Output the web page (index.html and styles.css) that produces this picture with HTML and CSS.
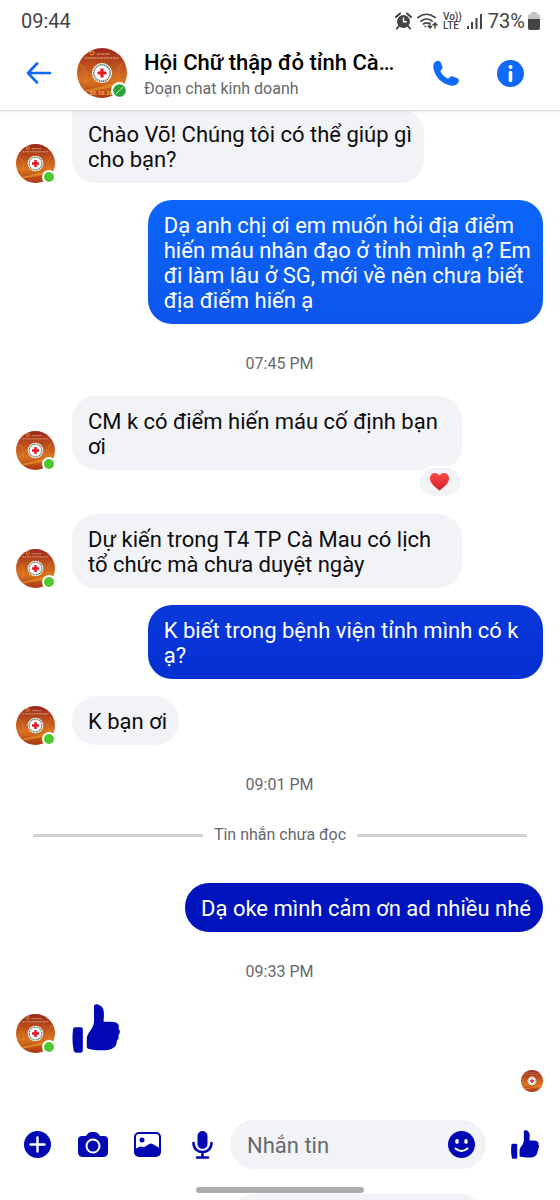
FILE: index.html
```html
<!DOCTYPE html>
<html lang="vi">
<head>
    <meta charset="UTF-8">
    <meta name="viewport" content="width=device-width, initial-scale=1.0">
    <title>Hội Chữ thập đỏ tỉnh Cà Mau</title>
    <link rel="stylesheet" href="styles.css">
</head>
<body>
    <!-- shared shapes -->
    <svg class="defs" aria-hidden="true">
        <defs>
            <linearGradient id="avatarBg" x1="0" y1="0" x2="0" y2="1">
                <stop offset="0" stop-color="#9c261c"/>
                <stop offset="0.3" stop-color="#b84a1c"/>
                <stop offset="0.65" stop-color="#d97420"/>
                <stop offset="1" stop-color="#a83616"/>
            </linearGradient>
            <linearGradient id="heartBg" x1="0" y1="0" x2="0" y2="1">
                <stop offset="0" stop-color="#f9484a"/>
                <stop offset="1" stop-color="#d31f26"/>
            </linearGradient>
            <clipPath id="round"><circle cx="25" cy="25" r="25"/></clipPath>
        </defs>
        <symbol id="avatar" viewBox="0 0 50 50">
            <g clip-path="url(#round)">
                <rect width="50" height="50" fill="url(#avatarBg)"/>
                <path d="M8 42c12-1 20-6 38-8v5C30 39 20 43 8 44z" fill="#f0a02c" opacity="0.6"/>
                <path d="M3 17c8 3 9 18 1 25M46 15c-7 7-7 13 0 21" stroke="#e58a35" stroke-width="2" fill="none" opacity="0.3"/>
                <circle cx="15" cy="5" r="2" fill="none" stroke="#f2a23c"/>
                <path d="M20 6h13" stroke="#e3b08c" stroke-dasharray="2 .5"/>
                <path d="M8 10h34" stroke="#e3b08c" stroke-dasharray="2.5 .6"/>
            </g>
            <circle cx="25" cy="25" r="10" fill="#fff"/>
            <circle cx="25" cy="25" r="8.2" fill="none" stroke="#4d7a62" stroke-width="1.6" stroke-dasharray="1.4 .7"/>
            <path d="M23.4 20.5h3.2v2.9h2.9v3.2h-2.9v2.9h-3.2v-2.9h-2.9v-3.2h2.9z" fill="#e3192a"/>
        </symbol>
        <symbol id="thumb" viewBox="0 0 144 149">
            <path d="M9 71h17q6 0 6 6v64q0 7-7 7H12q-7 0-8-7Q-2 112 2 78q1-7 7-7z"/>
            <path d="M44 106c0-20 21-27 22-54V7c0-7 9-8 16-4 12 6 15 18 14 30l-1 21c11 0 20-1 31 1 13 1 19 12 14 19 6 6 6 15 0 21 2 7 0 13-5 17 1 10-3 17-10 21-7 6-19 8-36 8-16 0-28-1-39-4-5-1-6-4-6-9z"/>
        </symbol>
    </svg>

    <div class="status-bar">
        <span class="clock">09:44</span>
        <svg width="17" height="18" viewBox="0 0 17 18" fill="#444">
            <circle cx="8.500" cy="9.500" r="6.500"/>
            <path d="M1 5l4-3.500M16 5l-4-3.500M4 14l-2 2.500M13 14l2 2.500" stroke="#444" stroke-width="2" stroke-linecap="round"/>
            <path d="M8.500 5.500v4.300h3.300" stroke="#fff" stroke-width="1.400" fill="none"/>
        </svg>
        <svg width="21" height="18" viewBox="0 0 21 18" fill="none" stroke="#444" stroke-width="1.700" stroke-linecap="round">
            <path d="M1 5.500Q9.500-1 18 5.500M4 9q5.500-4 11 0M6.500 12q3-2 5.500-.5"/>
            <path d="M8 14.500h.5M13 11v5m-2-2l2 2 1.500-1.500M18 16v-5m-2 2l2-2 2 2" stroke-width="1.500"/>
        </svg>
        <span class="volte"><span>Vo))</span><span>LTE</span></span>
        <svg width="16" height="16" viewBox="0 0 16 16" fill="#444">
            <path d="M0 13h2v3H0zM4 9h2v7H4zM8.500 5h2v11h-2zM13 1h2v15h-2z"/>
        </svg>
        <span class="percent">73%</span>
        <svg width="12" height="18" viewBox="0 0 12 18">
            <path d="M3 2V0h6v2h1q2 0 2 2v4H0V4q0-2 2-2z" fill="#c4c4c4"/>
            <path d="M0 7h12v9q0 2-2 2H2q-2 0-2-2z" fill="#444"/>
        </svg>
    </div>

    <header class="header">
        <button class="icon-button back" aria-label="Quay lại">
            <svg width="26" height="22" viewBox="0 0 26 22" fill="none" stroke="#0f69fa" stroke-width="2.600" stroke-linecap="round" stroke-linejoin="round">
                <path d="M11 1.500L2 11l9 9.500M2 11h22"/>
            </svg>
        </button>
        <div class="avatar avatar-large">
            <svg viewBox="0 0 50 50">
                <use href="#avatar"/>
                <text x="12" y="47" class="avatar-date">30.10.20</text>
            </svg>
            <svg class="badge" viewBox="0 0 17 17">
                <circle cx="8.500" cy="8.500" r="8.500" fill="#fff"/>
                <circle cx="8.500" cy="8.500" r="6.300" fill="#2fa336"/>
                <path d="M5 12l7-7" stroke="#b9e2b8"/>
            </svg>
        </div>
        <div class="contact">
            <h1>Hội Chữ thập đỏ tỉnh Cà…</h1>
            <p>Đoạn chat kinh doanh</p>
        </div>
        <button class="icon-button call" aria-label="Gọi">
            <svg width="26" height="26" viewBox="0 0 26 26" fill="#0f69fa">
                <path d="M2.500 1.500C5 0 7 .5 8 3l1.300 3.500c.5 1.500 0 2.500-1.300 3.500-.8.700-.6 1.500 0 2.500 1.500 2.500 3.500 4.300 6 5.700 1 .5 1.700.4 2.300-.4 1-1.300 2-1.800 3.500-1.300L24 18c2 1 2.500 2.700 1.300 4.500-1.800 2.700-4.500 3.800-8 3C8.500 23.500 2.500 17.500.5 8.500 0 5.500.5 3 2.500 1.500z"/>
            </svg>
        </button>
        <button class="icon-button info" aria-label="Thông tin">
            <svg width="27" height="27" viewBox="0 0 27 27">
                <circle cx="13.500" cy="13.500" r="13.500" fill="#0f69fa"/>
                <circle cx="13.500" cy="7" r="2" fill="#fff"/>
                <path d="M13.500 12.500v8" stroke="#fff" stroke-width="3.600" stroke-linecap="round"/>
            </svg>
        </button>
    </header>

    <main class="chat">
        <div class="message received continued">
            <div class="avatar"><svg><use href="#avatar"/></svg><span class="online"></span></div>
            <div class="bubble">Chào Võ! Chúng tôi có thể giúp gì<br>cho bạn?</div>
        </div>
        <div class="message sent">
            <div class="bubble blue-light">Dạ anh chị ơi em muốn hỏi địa điểm hiến máu nhân đạo ở tỉnh mình ạ? Em đi làm lâu ở SG, mới về nên chưa biết địa điểm hiến ạ</div>
        </div>
        <time class="time">07:45 PM</time>
        <div class="message received reacted">
            <div class="avatar"><svg><use href="#avatar"/></svg><span class="online"></span></div>
            <div class="bubble">CM k có điểm hiến máu cố định bạn ơi
                <span class="reaction">
                    <svg width="19" height="18" viewBox="0 0 19 18"><path d="M9.500 17.500C5 14 0 10.500 0 5.500 0 2 2.300 0 5 0c2 0 3.500 1 4.500 2.800C10.500 1 12 0 14 0c2.700 0 5 2 5 5.500 0 5-5 8.500-9.500 12z" fill="url(#heartBg)"/></svg>
                </span>
            </div>
        </div>
        <div class="message received">
            <div class="avatar"><svg><use href="#avatar"/></svg><span class="online"></span></div>
            <div class="bubble">Dự kiến trong T4 TP Cà Mau có lịch tổ chức mà chưa duyệt ngày</div>
        </div>
        <div class="message sent">
            <div class="bubble blue-mid">K biết trong bệnh viện tỉnh mình có k ạ?</div>
        </div>
        <div class="message received">
            <div class="avatar"><svg><use href="#avatar"/></svg><span class="online"></span></div>
            <div class="bubble">K bạn ơi</div>
        </div>
        <time class="time">09:01 PM</time>
        <div class="unread">Tin nhắn chưa đọc</div>
        <div class="message sent">
            <div class="bubble blue-dark">Dạ oke mình cảm ơn ad nhiều nhé</div>
        </div>
        <time class="time">09:33 PM</time>
        <div class="message received">
            <div class="avatar"><svg><use href="#avatar"/></svg><span class="online"></span></div>
            <svg class="big-thumb"><use href="#thumb"/></svg>
        </div>
        <div class="seen"><svg><use href="#avatar"/></svg></div>
    </main>

    <form class="composer">
        <button type="button" class="tool" aria-label="Thêm">
            <svg width="27" height="27" viewBox="0 0 27 27">
                <circle cx="13.500" cy="13.500" r="13.500"/>
                <path d="M13.500 6.500v14M6.500 13.500h14" stroke="#fff" stroke-width="2.400" stroke-linecap="round"/>
            </svg>
        </button>
        <button type="button" class="tool" aria-label="Máy ảnh">
            <svg width="30" height="25" viewBox="0 0 30 25">
                <path d="M9 2.500Q10.500 0 13 0h4q2.500 0 4 2.500L22 4h4q4 0 4 4v12q0 5-5 5H5q-5 0-5-5V8q0-4 4-4h4z"/>
                <circle cx="15" cy="14" r="6.500" fill="none" stroke="#fff" stroke-width="2"/>
            </svg>
        </button>
        <button type="button" class="tool" aria-label="Ảnh">
            <svg width="27" height="25" viewBox="0 0 27 25">
                <rect x="1" y="1" width="25" height="23" rx="4" fill="#fff" stroke="#0008b4" stroke-width="2"/>
                <circle cx="8" cy="8" r="2.500"/>
                <path d="M1 17l4-2q1.500-.8 3-.2l2 .4 5-3q2-1.200 4 0l7 4v4q0 4-4 4H5q-4 0-4-4z"/>
            </svg>
        </button>
        <button type="button" class="tool" aria-label="Ghi âm">
            <svg width="21" height="28" viewBox="0 0 21 28">
                <rect x="5.500" y="0" width="10" height="18" rx="5"/>
                <path d="M1.500 12c0 12 18 12 18 0M10.500 21v5M5 26.500h11" fill="none" stroke="#0008b4" stroke-width="2.600" stroke-linecap="round"/>
            </svg>
        </button>
        <div class="field">
            <input type="text" placeholder="Nhắn tin" aria-label="Nhắn tin">
            <button type="button" class="emoji" aria-label="Biểu tượng cảm xúc">
                <svg width="27" height="27" viewBox="0 0 27 27">
                    <circle cx="13.500" cy="13.500" r="13.500"/>
                    <ellipse cx="9" cy="10.500" rx="1.800" ry="2.400" fill="#fff"/>
                    <ellipse cx="18" cy="10.500" rx="1.800" ry="2.400" fill="#fff"/>
                    <path d="M7.500 17.500q6 5 12 0" stroke="#fff" stroke-width="2" stroke-linecap="round" fill="none"/>
                </svg>
            </button>
        </div>
        <button type="button" class="tool like" aria-label="Thích">
            <svg width="28" height="29"><use href="#thumb"/></svg>
        </button>
    </form>

    <div class="bottom">
        <div class="handle"></div>
        <div class="next-field"></div>
    </div>
</body>
</html>
```
FILE: styles.css
```css
* {
    box-sizing: border-box;
}
body {
    margin: 0;
    min-height: 100vh;
    display: flex;
    flex-direction: column;
    background-color: #fff;
    color: #0c0c0e;
    font-family: Roboto, "Noto Sans", sans-serif;
    font-size: 22px;
    line-height: 25px;
}
svg {
    display: block;
}
button {
    padding: 0;
    border: none;
    background: none;
    display: flex;
    align-items: center;
    justify-content: center;
    flex-shrink: 0;
    cursor: pointer;
}
.defs {
    position: absolute;
    width: 0;
    height: 0;
}
.status-bar {
    display: flex;
    align-items: center;
    gap: 5px;
    height: 36px;
    padding: 6px 20px 0 21px;
    color: #444;
    font-size: 20px;
}
.clock {
    margin-right: auto;
}
.volte {
    display: flex;
    flex-direction: column;
    font-size: 10px;
    line-height: 9px;
    font-weight: 500;
}
.percent {
    margin-right: -2px;
}
.header {
    position: relative;
    z-index: 1;
    display: flex;
    align-items: center;
    height: 75px;
    background-color: #fff;
    border-bottom: 1px solid #dcdcde;
    box-shadow: 0 1px 2px rgba(0, 0, 0, 0.08);
}
.back {
    width: 77px;
}
.call {
    width: 65px;
}
.info {
    width: 65px;
    margin-right: 17px;
}
.contact {
    flex: 1;
    min-width: 0;
    margin-left: 17px;
    padding-top: 3px;
}
.contact h1 {
    margin: 0;
    font-size: 22px;
    font-weight: 500;
    line-height: 28px;
    color: #000;
    overflow: hidden;
    white-space: nowrap;
    text-overflow: ellipsis;
}
.contact p {
    margin: 0;
    font-size: 16px;
    line-height: 23px;
    color: #66686c;
}
.avatar {
    position: relative;
    flex-shrink: 0;
    width: 39px;
    height: 39px;
}
.avatar svg {
    width: 100%;
    height: 100%;
}
.avatar-large {
    width: 50px;
    height: 50px;
}
.avatar-date {
    font-size: 6px;
    font-weight: 700;
    fill: #f3b04a;
}
.avatar .badge {
    position: absolute;
    right: -1px;
    bottom: -1px;
    width: 17px;
    height: 17px;
}
.online {
    position: absolute;
    right: -1px;
    bottom: -1px;
    width: 14px;
    height: 14px;
    border: 2px solid #fff;
    border-radius: 50%;
    background-color: #4cc92f;
}
.chat {
    flex: 1;
    display: flex;
    flex-direction: column;
    gap: 17px;
    margin-top: -2px;
    padding: 0 17px 28px 16px;
}
.message {
    display: flex;
    align-items: flex-end;
    gap: 17px;
}
.sent {
    justify-content: flex-end;
}
.bubble {
    position: relative;
    max-width: 75%;
    padding: 13px 12px 11px 16px;
    border-radius: 24px;
}
.received .bubble {
    max-width: 74%;
    background-color: #f2f3f7;
}
.continued .bubble {
    border-top-left-radius: 4px;
}
.sent .bubble {
    color: #fff;
}
.sent .blue-light {
    background: linear-gradient(#0c66fa, #0d55ec);
}
.sent .blue-mid {
    background: linear-gradient(#0838db, #0530d2);
}
.sent .blue-dark {
    background-color: #0014bd;
}
.reacted {
    margin-bottom: 27px;
}
.reaction {
    position: absolute;
    right: 0;
    bottom: -28px;
    display: flex;
    align-items: center;
    justify-content: center;
    width: 44px;
    height: 32px;
    border: 2px solid #fff;
    border-radius: 16px;
    background-color: #f2f3f7;
}
.time {
    margin: 13px 0 5px;
    text-align: center;
    font-size: 16px;
    line-height: 20px;
    color: #66686c;
}
.unread {
    display: flex;
    align-items: center;
    gap: 11px;
    margin: 8px 16px 21px 17px;
    font-size: 16px;
    line-height: 20px;
    color: #66686c;
}
.unread::before,
.unread::after {
    content: "";
    flex: 1;
    height: 3px;
    background-color: #d0d2d6;
}
.big-thumb {
    width: 48px;
    height: 49px;
    fill: #0008b4;
}
.seen {
    align-self: flex-end;
}
.seen svg {
    width: 22px;
    height: 22px;
}
.composer {
    display: flex;
    align-items: center;
    padding-left: 10px;
}
.tool {
    width: 55px;
    height: 49px;
    fill: #0008b4;
}
.field {
    flex: 1;
    min-width: 0;
    display: flex;
    align-items: center;
    height: 49px;
    padding: 0 11px 0 17px;
    border-radius: 25px;
    background-color: #f2f3f7;
}
.field input {
    flex: 1;
    min-width: 0;
    padding: 2px 0 0;
    border: none;
    outline: none;
    background: none;
    font: inherit;
    color: #0c0c0e;
}
.field input::placeholder {
    color: #66686c;
    opacity: 1;
}
.emoji {
    fill: #0008b4;
}
.like {
    width: 74px;
    padding-left: 4px;
}
.bottom {
    height: 31px;
    padding-top: 18px;
    overflow: hidden;
}
.handle {
    width: 30%;
    height: 6px;
    margin: 0 auto 1px;
    border-radius: 3px;
    background-color: #adadad;
}
.next-field {
    height: 49px;
    margin: 0 74px 0 230px;
    border-radius: 25px;
    background-color: #f2f3f7;
}
```
